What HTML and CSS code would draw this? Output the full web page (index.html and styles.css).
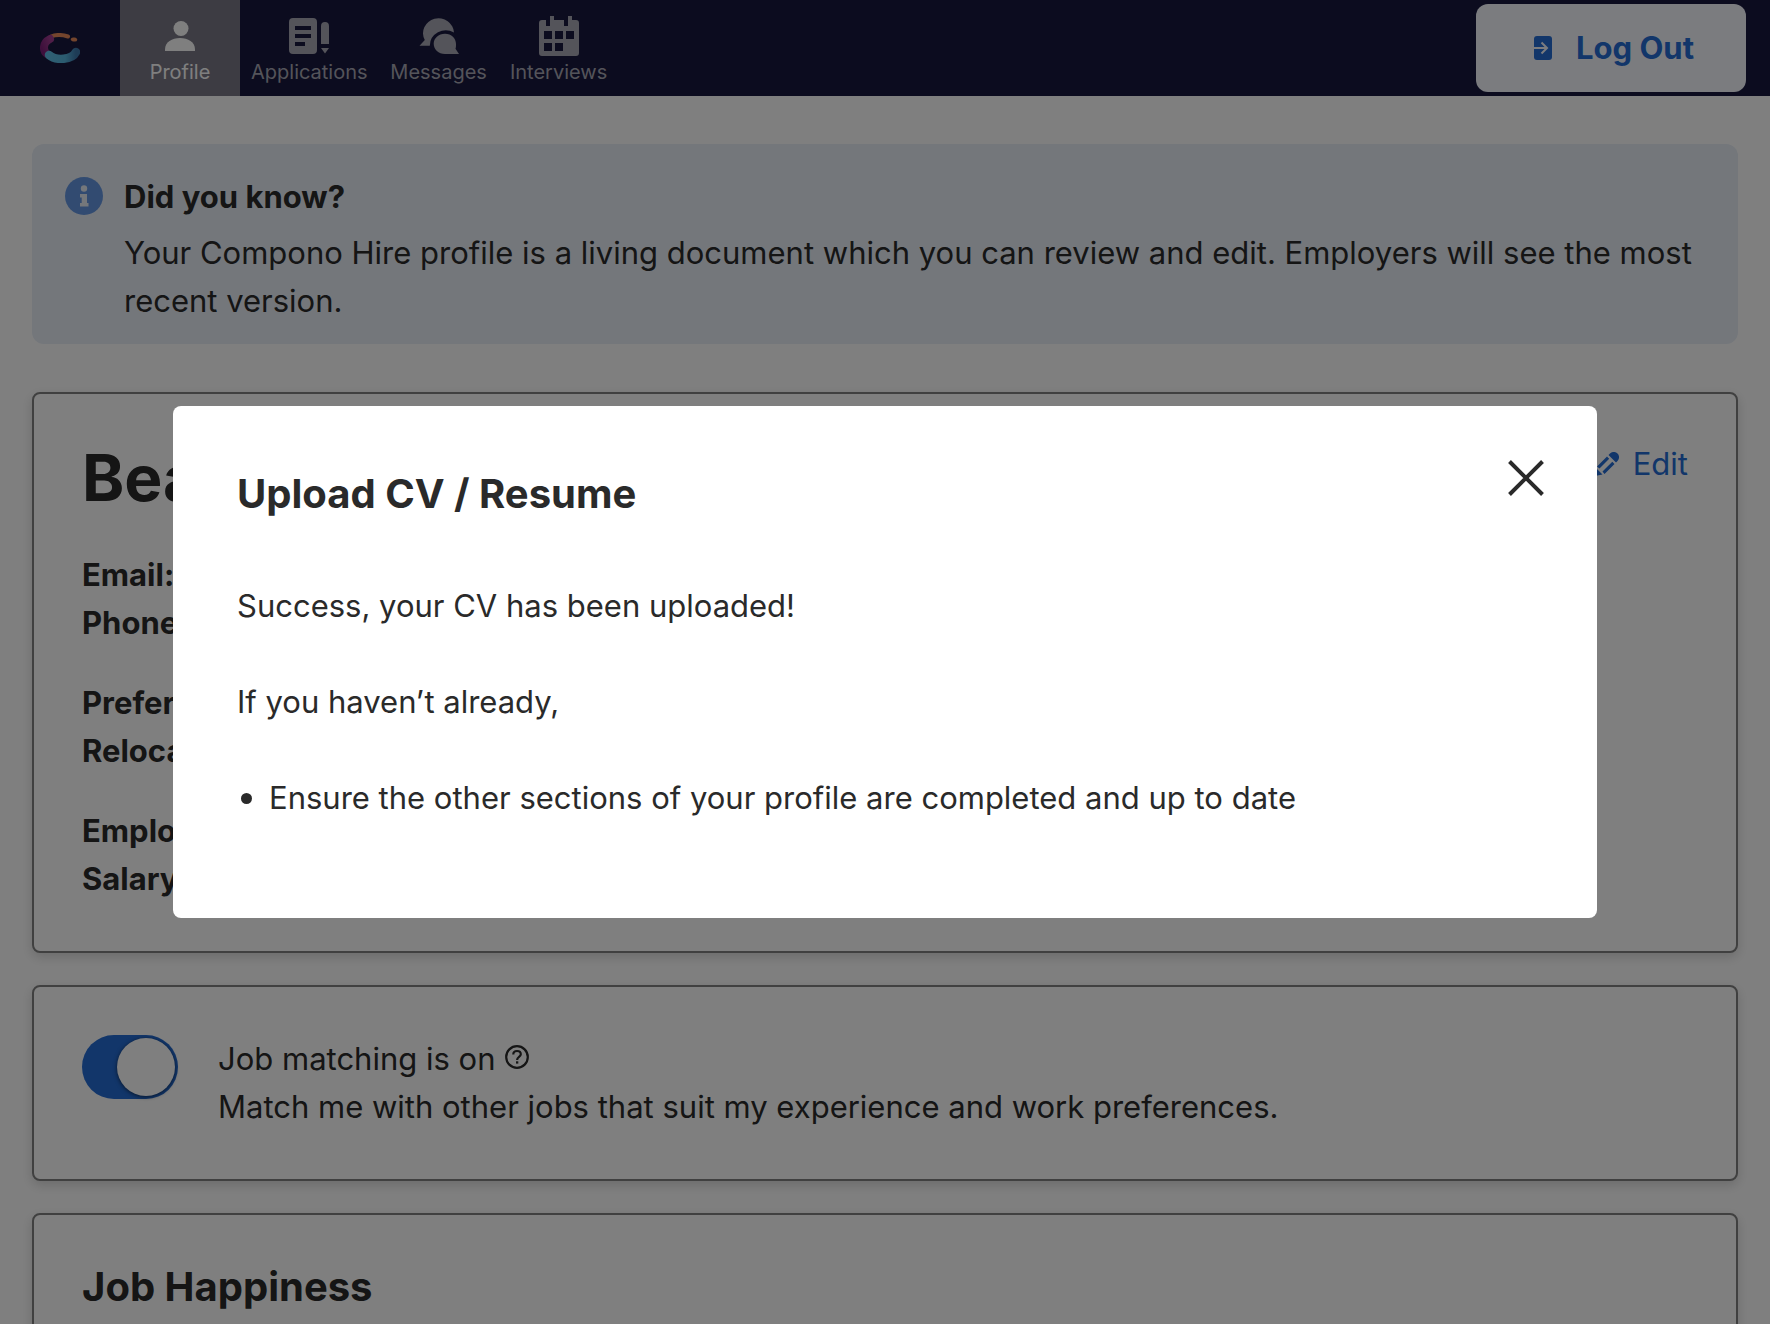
FILE: index.html
```html
<!DOCTYPE html>
<html lang="en">
<head>
  <meta charset="utf-8">
  <meta name="viewport" content="width=device-width, initial-scale=1">
  <title>Profile</title>
  <link rel="stylesheet" href="styles.css">
</head>
<body>
  <header class="topbar">
    <a class="logo" href="#" aria-label="Compono">
      <svg width="40" height="30" viewBox="0 0 40 30" aria-hidden="true">
        <defs>
          <linearGradient id="logo-blue" x1="0" x2="1"><stop offset="0" stop-color="#5fbfe6"/><stop offset=".6" stop-color="#58b8e0"/><stop offset="1" stop-color="#3c78ac"/></linearGradient>
          <linearGradient id="logo-purple" x1="0" x2="1" y1="1" y2="0"><stop offset="0" stop-color="#7c2078"/><stop offset="1" stop-color="#a03c90"/></linearGradient>
        </defs>
        <path d="M11 3.500C16 1.500 22 1.500 28 3.500" fill="none" stroke="#e88a5a" stroke-width="4" stroke-linecap="round"/>
        <ellipse cx="34" cy="6.500" rx="3.300" ry="2" fill="#e88a5a" transform="rotate(10 34 6.500)"/>
        <path d="M10 6C2 10 3 18 7 21" fill="none" stroke="url(#logo-purple)" stroke-width="8" stroke-linecap="round"/>
        <path d="M9 22C16 28 32 27 36 19" fill="none" stroke="url(#logo-blue)" stroke-width="8.500" stroke-linecap="round"/>
      </svg>
    </a>
    <nav class="tabs" aria-label="Main">
      <a class="tab tab-active" href="#" aria-current="page">
        <svg class="tab-icon" viewBox="0 0 40 40" aria-hidden="true"><circle cx="21" cy="12.500" r="7.500"/><path d="M5 35v-1.500C5 26 12 22 20 22S35 26 35 33.500V35z"/></svg>
        <span>Profile</span>
      </a>
      <a class="tab" href="#">
        <svg class="tab-icon" viewBox="0 0 40 40" aria-hidden="true"><path fill-rule="evenodd" d="M4 2h20a4 4 0 0 1 4 4v28a4 4 0 0 1-4 4H4a4 4 0 0 1-4-4V6a4 4 0 0 1 4-4zM6 10v4h16v-4zM6 18v4h16v-4zM6 26v4h10v-4z"/><path d="M32 28V10a4 4 0 0 1 8 0v18zM32 32h8l-4 5.500z"/></svg>
        <span>Applications</span>
      </a>
      <a class="tab" href="#">
        <svg class="tab-icon" viewBox="0 0 40 40" aria-hidden="true"><path d="M.5 29.700 5.800 24A15.500 14.800 0 1 1 35 16.500 16 15.500 0 0 0 10.800 29.700z"/><path d="M37 28c0 2 0 3.500-.5 4.800L40 38H26c-6.500 0-11.300-4.500-11.300-10.200S19.500 17.700 26 17.700 37 22 37 28z"/></svg>
        <span>Messages</span>
      </a>
      <a class="tab" href="#">
        <svg class="tab-icon" viewBox="0 0 40 40" aria-hidden="true"><path fill-rule="evenodd" d="M3 4h4v6h4V0h4v4h10v6h4V0h4v4h4a3 3 0 0 1 3 3v30a3 3 0 0 1-3 3H3a3 3 0 0 1-3-3V7a3 3 0 0 1 3-3zM5 15v8h8v-8zM16 15v8h8v-8zM27 15v8h8v-8zM5 27v8h8v-8zM16 27v8h8v-8z"/></svg>
        <span>Interviews</span>
      </a>
    </nav>
    <button class="logout" type="button">
      <svg width="18" height="24" viewBox="0 0 18 24" aria-hidden="true"><rect width="18" height="24" rx="3" fill="currentColor"/><path d="M0 12H12M7.500 6.500 13 12l-5.500 5.500" fill="none" stroke="#f6f8ff" stroke-width="2"/></svg>
      <span>Log Out</span>
    </button>
  </header>

  <main class="content">
    <section class="notice">
      <svg class="notice-icon" viewBox="0 0 38 38" aria-hidden="true"><circle cx="19" cy="19" r="19" fill="#6497e2"/><g fill="#e8eef7"><circle cx="19" cy="11.500" r="3.200"/><path d="M15 17h7v9h1.500v3.500h-8.500V26h1.700v-5.500H15z"/></g></svg>
      <div class="notice-text">
        <h2 class="notice-title">Did you know?</h2>
        <p>Your Compono Hire profile is a living document which you can review and edit. Employers will see the most recent version.</p>
      </div>
    </section>

    <section class="card">
      <div class="card-head">
        <h1 class="name">Bea</h1>
        <a class="edit" href="#">
          <svg width="24" height="24" viewBox="0 0 24 24" aria-hidden="true"><path fill="currentColor" d="M15 1.500a5.200 5.200 0 0 1 7.500 7.500L21 10.500 13.500 3zM12 4.500l2.200 2.200L4.500 16.500 2 14.500zM17.300 9.800 19.500 12l-10 10-2-2.500zM1.500 16.500l6 6L0 24z"/></svg>
          <span>Edit</span>
        </a>
      </div>
      <div class="details">
        <dl class="group"><dt>Email:</dt><dt>Phone:</dt></dl>
        <dl class="group"><dt>Preferred:</dt><dt>Relocation:</dt></dl>
        <dl class="group"><dt>Employment:</dt><dt>Salary:</dt></dl>
      </div>
    </section>

    <section class="card matching">
      <input class="switch" type="checkbox" role="switch" id="matching" checked>
      <div>
        <div class="matching-title">
          <label for="matching">Job matching is on</label>
          <svg class="help" width="24" height="24" viewBox="0 0 24 24" aria-hidden="true"><g fill="none" stroke="currentColor" stroke-width="2.200"><circle cx="12" cy="12" r="10.800"/><path d="M8.300 9.500C8.300 7.300 9.800 6 12 6s3.800 1.300 3.800 3.300c0 2.700-3.700 2.700-3.700 5.700"/></g><rect x="11" y="16.300" width="2.300" height="2.300" fill="currentColor"/></svg>
        </div>
        <p>Match me with other jobs that suit my experience and work preferences.</p>
      </div>
    </section>

    <section class="card">
      <h2 class="heading">Job Happiness</h2>
    </section>
  </main>

  <div class="overlay">
    <section class="modal" role="dialog" aria-modal="true" aria-labelledby="modal-title">
      <button class="close" type="button" aria-label="Close">
        <svg width="36" height="36" viewBox="0 0 36 36" aria-hidden="true"><path d="M1.500 1.500l33 33M34.500 1.500l-33 33" stroke="currentColor" stroke-width="4"/></svg>
      </button>
      <h2 class="heading" id="modal-title">Upload CV / Resume</h2>
      <div class="modal-body">
        <p>Success, your CV has been uploaded!</p>
        <p>If you haven’t already,</p>
        <ul class="steps">
          <li>Ensure the other sections of your profile are completed and up to date</li>
        </ul>
      </div>
    </section>
  </div>
</body>
</html>
```
FILE: styles.css
```css
* {
  box-sizing: border-box;
}

body {
  margin: 0;
  height: 100vh;
  overflow: hidden;
  background: #fff;
  color: #2a2a2a;
  font: 400 31px/48px Inter, "Liberation Sans", sans-serif;
}

h1, h2, p, dl, ul {
  margin: 0;
  padding: 0;
}

svg {
  display: block;
  flex: none;
}

a {
  color: inherit;
  text-decoration: none;
}

button {
  border: 0;
  font: inherit;
  cursor: pointer;
}

.topbar {
  display: flex;
  align-items: center;
  height: 96px;
  padding-right: 24px;
  background: #18193f;
}

.logo {
  display: flex;
  justify-content: center;
  width: 120px;
}

.tabs {
  display: flex;
  flex: 1;
  align-self: stretch;
}

.tab {
  display: flex;
  flex-direction: column;
  align-items: center;
  gap: 4px;
  min-width: 120px;
  padding: 16px 11px 12px;
  color: #a9a8b4;
  font-size: 20px;
  line-height: 24px;
}

.tab-active {
  background: #7a7987;
  color: #fff;
}

.tab-icon {
  width: 40px;
  height: 40px;
  fill: currentColor;
}

.logout {
  display: flex;
  align-items: center;
  gap: 24px;
  height: 88px;
  padding: 0 52px 0 58px;
  border-radius: 12px;
  background: #f6f8ff;
  color: #246cd4;
  font-weight: 700;
}

.content {
  display: flex;
  flex-direction: column;
  gap: 32px;
  padding: 48px 32px;
}

.notice {
  display: flex;
  gap: 21px;
  margin-bottom: 16px;
  padding: 29px 33px 19px;
  border-radius: 12px;
  background: #e8eef7;
}

.notice-icon {
  width: 38px;
  height: 38px;
  margin-top: 4px;
}

.notice-text {
  display: grid;
  gap: 8px;
}

.notice-title {
  font-size: 31px;
  font-weight: 700;
}

.card {
  padding: 48px;
  border: 2px solid #808080;
  border-radius: 8px;
  background: #fff;
  box-shadow: 0 4px 12px rgba(0, 0, 0, 0.16);
}

.card-head {
  display: flex;
  justify-content: space-between;
  align-items: flex-start;
  margin-bottom: 37px;
}

.name {
  font-size: 64px;
  line-height: 72px;
  font-weight: 700;
}

.edit {
  display: flex;
  align-items: center;
  gap: 14px;
  color: #246cd4;
  line-height: 44px;
}

.details {
  display: grid;
  gap: 32px;
  font-weight: 700;
}

.matching {
  display: flex;
  gap: 40px;
}

.switch {
  appearance: none;
  display: flex;
  flex: none;
  justify-content: flex-end;
  width: 96px;
  height: 64px;
  margin: 0;
  padding: 3px;
  border-radius: 32px;
  background: #246cd4;
}

.switch::before {
  content: "";
  width: 58px;
  height: 58px;
  border-radius: 50%;
  background: #fff;
  box-shadow: 0 1px 4px rgba(0, 0, 0, 0.6);
}

.switch:not(:checked) {
  justify-content: flex-start;
  background: #808080;
}

.matching-title {
  display: flex;
  align-items: center;
  gap: 10px;
}

.help {
  margin-bottom: 4px;
}

.heading {
  font-size: 40px;
  line-height: 48px;
  font-weight: 700;
}

.overlay {
  position: fixed;
  inset: 0;
  display: flex;
  align-items: center;
  justify-content: center;
  background: rgba(0, 0, 0, 0.5);
}

.modal {
  position: relative;
  width: 90%;
  max-width: 1424px;
  padding: 64px 64px 96px;
  border-radius: 8px;
  background: #fff;
}

.close {
  position: absolute;
  top: 54px;
  right: 53px;
  padding: 0;
  background: none;
  color: #2a2a2a;
}

.modal-body {
  display: grid;
  gap: 48px;
  margin-top: 64px;
}

.steps {
  list-style: none;
}

.steps li {
  display: flex;
  align-items: center;
  gap: 17px;
}

.steps li::before {
  content: "";
  width: 11px;
  height: 11px;
  margin-left: 4px;
  border-radius: 50%;
  background: currentColor;
}
```
